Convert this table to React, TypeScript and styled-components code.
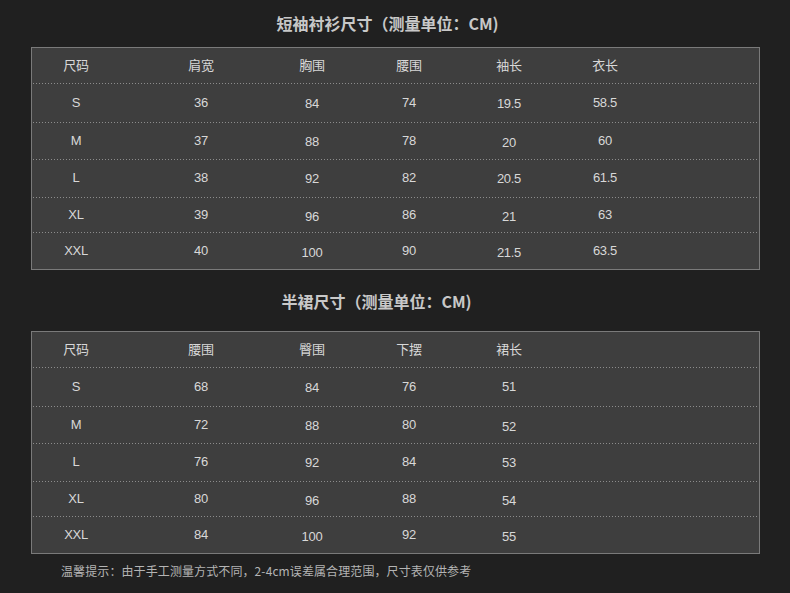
import React from 'react';
import styled, { createGlobalStyle } from 'styled-components';

type Row = { cells: string[]; dy?: number[] };

const GlobalStyle = createGlobalStyle`
  html, body {
    margin: 0;
    padding: 0;
    background: #202020;
  }
  body {
    font-family: "Liberation Sans", "Noto Sans CJK SC", sans-serif;
    color: #dcdcdc;
  }
`;

const shirtHead = ['尺码', '肩宽', '胸围', '腰围', '袖长', '衣长'];
const shirtRows: Row[] = [
  { cells: ['S', '36', '84', '74', '19.5', '58.5'], dy: [0, 0, 1, 0, 1, 0] },
  { cells: ['M', '37', '88', '78', '20', '60'], dy: [0, 0, 1, 0, 2, 0] },
  { cells: ['L', '38', '92', '82', '20.5', '61.5'], dy: [0, 0, 1, 0, 1, 0] },
  { cells: ['XL', '39', '96', '86', '21', '63'], dy: [0, 0, 2, 0, 2, 0] },
  { cells: ['XXL', '40', '100', '90', '21.5', '63.5'], dy: [0, 0, 2, 0, 2, 0] }
];

const skirtHead = ['尺码', '腰围', '臀围', '下摆', '裙长'];
const skirtRows: Row[] = [
  { cells: ['S', '68', '84', '76', '51'], dy: [0, 0, 1, 0, 0] },
  { cells: ['M', '72', '88', '80', '52'], dy: [0, 0, 1, 0, 2] },
  { cells: ['L', '76', '92', '84', '53'], dy: [0, 0, 1, 0, 1] },
  { cells: ['XL', '80', '96', '88', '54'], dy: [0, 0, 2, 0, 2] },
  { cells: ['XXL', '84', '100', '92', '55'], dy: [0, 0, 2, 0, 2] }
];

const rowHeights = [35, 39, 37, 38, 35, 37];

const SizeTable: React.FC<{
  title: string;
  head: string[];
  rows: Row[];
  top: number;
  titleGap: number;
  titleShift: number;
}> = ({ title, head, rows, top, titleGap, titleShift }) => (
  <Section $top={top}>
    <Title $gap={titleGap} $shift={titleShift}>
      {title}
    </Title>
    <TableBox>
      <TableRow $h={rowHeights[0]}>
        {head.map((h) => (
          <Cell key={h}>{h}</Cell>
        ))}
      </TableRow>
      {rows.map((r, i) => (
        <TableRow key={r.cells[0]} $h={rowHeights[i + 1]} $dotted>
          {r.cells.map((c, j) => (
            <Cell key={j} $dy={r.dy ? r.dy[j] : 0}>
              {c}
            </Cell>
          ))}
        </TableRow>
      ))}
    </TableBox>
  </Section>
);

export default function App() {
  return (
    <Page>
      <GlobalStyle />
      <SizeTable
        title="短袖衬衫尺寸（测量单位：CM)"
        head={shirtHead}
        rows={shirtRows}
        top={12}
        titleGap={13}
        titleShift={16}
      />
      <SizeTable
        title="半裙尺寸（测量单位：CM)"
        head={skirtHead}
        rows={skirtRows}
        top={20}
        titleGap={19}
        titleShift={38}
      />
      <Note>温馨提示：由于手工测量方式不同，2-4cm误差属合理范围，尺寸表仅供参考</Note>
    </Page>
  );
}

const Page = styled.div`
  width: 790px;
  height: 593px;
  padding-left: 31px;
  box-sizing: border-box;
  overflow: hidden;
  display: flex;
  flex-direction: column;
`;

const Section = styled.div<{ $top: number }>`
  width: 729px;
  margin-top: ${(p) => p.$top}px;
`;

const Title = styled.h2<{ $gap: number; $shift: number }>`
  all: unset;
  display: block;
  line-height: 22px;
  margin-bottom: ${(p) => p.$gap}px;
  padding-right: ${(p) => p.$shift}px;
  text-align: center;
  font-family: "Noto Sans CJK SC", sans-serif;
  font-size: 16px;
  font-weight: 700;
  color: #c8c8c8;
`;

const TableBox = styled.div`
  box-sizing: border-box;
  width: 729px;
  border: 1px solid #7a7a7a;
  background: #3e3e3e;
`;

const TableRow = styled.div<{ $h: number; $dotted?: boolean }>`
  display: grid;
  grid-template-columns: 86px 164px 58px 136px 64px 128px 1fr;
  align-items: center;
  height: ${(p) => p.$h}px;
  box-sizing: border-box;
  margin: 0 1px;
  ${(p) =>
    p.$dotted &&
    `
    background-image: linear-gradient(to right, #8c8c8c 1px, transparent 1px);
    background-size: 3px 1px;
    background-repeat: repeat-x;
    background-position: 0 0;
  `}
`;

const Cell = styled.div<{ $dy?: number }>`
  text-align: center;
  font-size: 13px;
  line-height: 16px;
  white-space: nowrap;
  letter-spacing: -0.3px;
  color: #d8d8d8;
  transform: translateY(${(p) => p.$dy || 0}px);
`;

const Note = styled.div`
  margin: 9px 0 0 30px;
  font-family: "Noto Sans CJK SC", sans-serif;
  font-size: 12px;
  line-height: 16px;
  letter-spacing: 0.1px;
  color: #b4b4b4;
`;
